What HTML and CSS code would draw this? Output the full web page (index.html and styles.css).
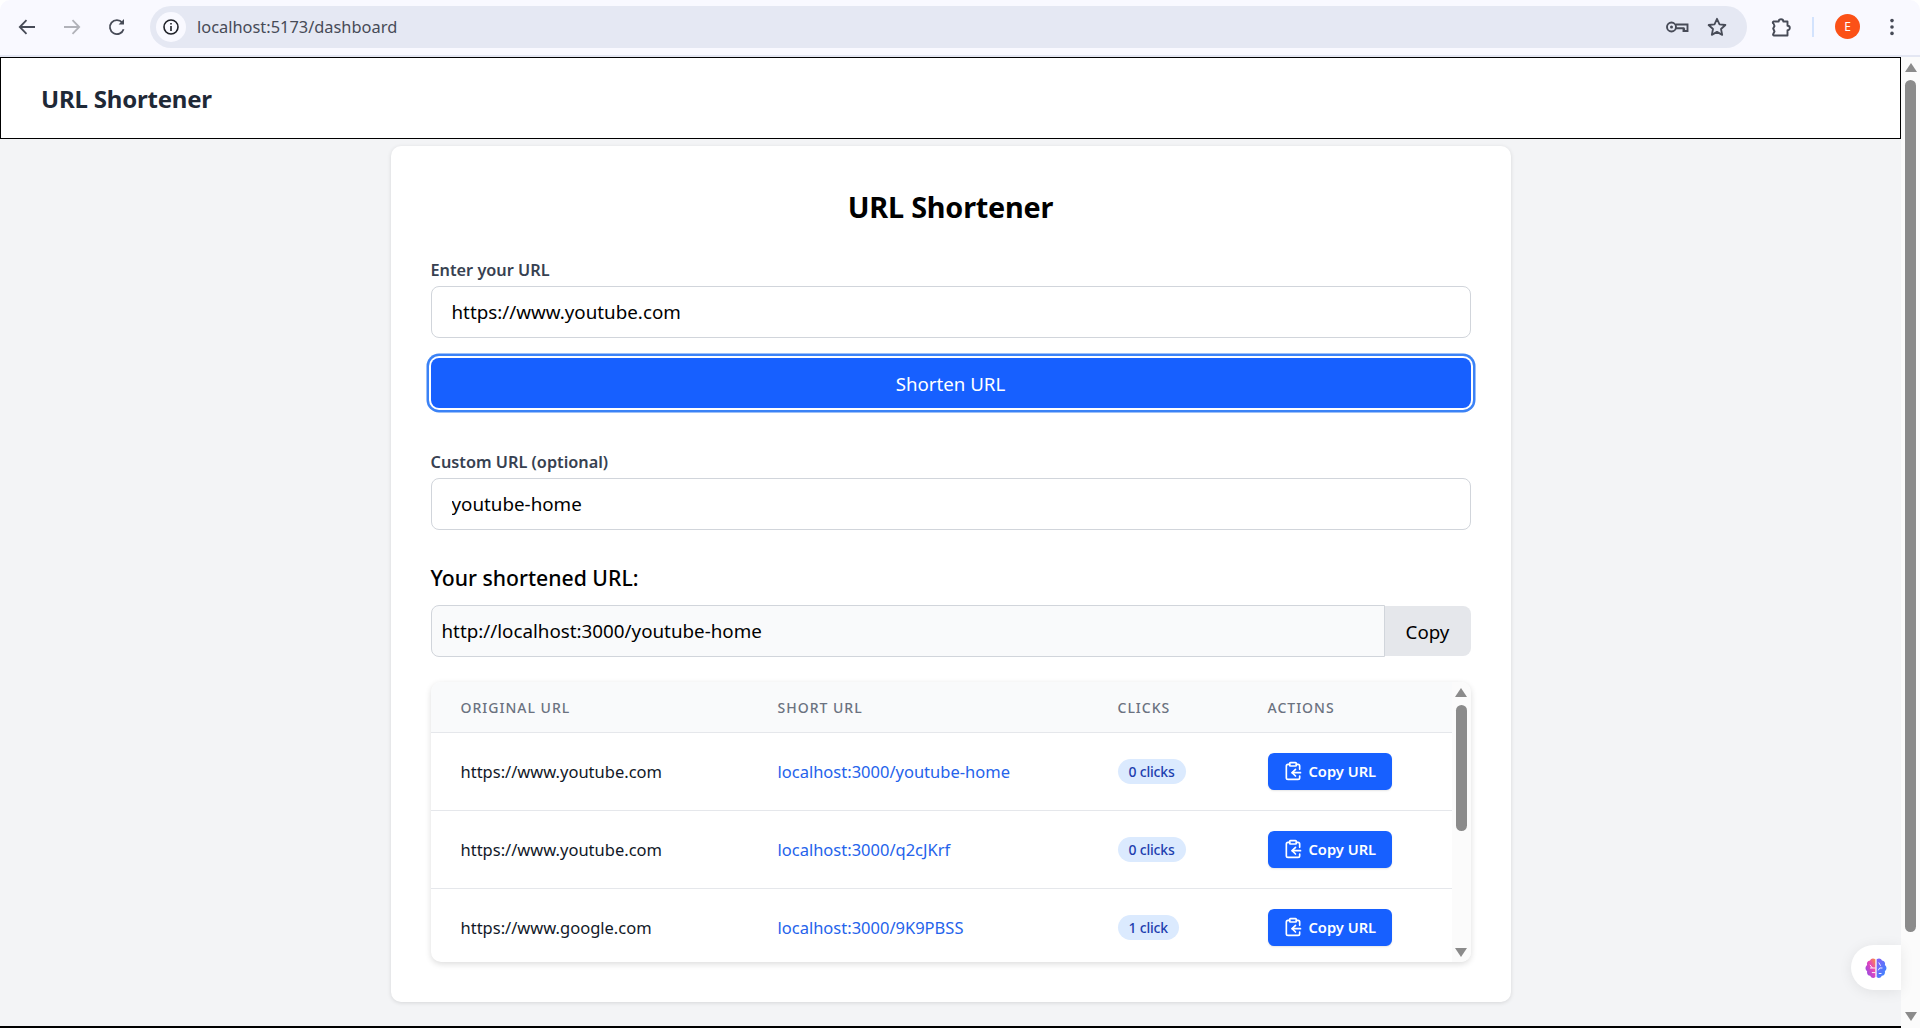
FILE: index.html
```html
<!DOCTYPE html>
<html lang="en">
<head>
    <meta charset="UTF-8">
    <meta name="viewport" content="width=device-width, initial-scale=1.0">
    <title>URL Shortener</title>
    <link rel="stylesheet" href="styles.css">
</head>
<body>
    <svg class="icon-defs" width="0" height="0">
        <symbol id="clipboard" viewBox="0 0 24 24" fill="none" stroke="currentColor" stroke-width="2" stroke-linecap="round" stroke-linejoin="round">
            <rect width="8" height="4" x="8" y="2" rx="1" ry="1"/>
            <path d="M8 4H6a2 2 0 0 0-2 2v14a2 2 0 0 0 2 2h12a2 2 0 0 0 2-2v-2"/>
            <path d="M16 4h2a2 2 0 0 1 2 2v4"/>
            <path d="M21 14H11"/>
            <path d="m15 10-4 4 4 4"/>
        </symbol>
        <linearGradient id="brainLeft" x1="1" y1="0" x2="0" y2="1">
            <stop offset="0" stop-color="#fb923c"/>
            <stop offset="0.4" stop-color="#e845b8"/>
            <stop offset="1" stop-color="#7c4df0"/>
        </linearGradient>
        <linearGradient id="brainRight" x1="0" y1="0" x2="1" y2="1">
            <stop offset="0" stop-color="#8b5cf6"/>
            <stop offset="1" stop-color="#2f8bff"/>
        </linearGradient>
    </svg>

    <div class="browser-bar">
        <div class="nav-buttons">
            <svg class="nav-icon" width="24" height="24" viewBox="0 0 24 24" fill="none" stroke="#474b57" stroke-width="1.8">
                <path d="M20 12H5M11.500 5.200 4.800 12l6.700 6.800"/>
            </svg>
            <svg class="nav-icon" width="24" height="24" viewBox="0 0 24 24" fill="none" stroke="#b1b2b9" stroke-width="1.8">
                <path d="M4 12h15M12.500 5.200l6.700 6.800-6.700 6.800"/>
            </svg>
            <svg class="nav-icon" width="24" height="24" viewBox="0 0 24 24" fill="none" stroke="#474b57" stroke-width="1.8">
                <path d="M18.600 14.200a7 7 0 1 1-1.300-6.600"/>
                <path d="M19 4v5.400h-5.400z" fill="#474b57" stroke="none"/>
            </svg>
        </div>
        <div class="address-bar">
            <span class="site-info">
                <svg width="18" height="18" viewBox="0 0 18 18" fill="none" stroke="#1f2128" stroke-width="1.6">
                    <circle cx="9" cy="9" r="7"/>
                    <path d="M9 8v5M9 5v1.600"/>
                </svg>
            </span>
            <span class="address-text">localhost:5173/dashboard</span>
            <svg class="key-icon" width="24" height="24" viewBox="0 0 24 24" fill="none" stroke="#474b57" stroke-width="1.9">
                <circle cx="6.500" cy="12" r="4.500"/>
                <circle cx="6.500" cy="12" r="1.500" fill="#474b57" stroke="none"/>
                <path d="M11 9.500h11.500v6.500h-4v-2.800H11"/>
                <path d="M19.500 13.200V16" stroke-width="1.200"/>
            </svg>
            <svg class="star-icon" width="24" height="24" viewBox="0 0 24 24" fill="none" stroke="#474b57" stroke-width="1.8" stroke-linejoin="round">
                <path d="m12 3.800 2.500 5.500 5.900.7-4.400 4 1.200 5.900-5.200-3-5.200 3 1.200-5.900-4.400-4 5.900-.7z"/>
            </svg>
        </div>
        <svg class="puzzle-icon" width="24" height="24" viewBox="0 0 24 24" fill="none" stroke="#474b57" stroke-width="1.9" stroke-linejoin="round">
            <path d="M5.500 6.500h4.200a2.300 2.300 0 0 1 4.600 0h4.200v4.200a2.300 2.300 0 0 1 0 4.600v5.200H5a1 1 0 0 1-.8-1.500l1.300-2.500-1.300-3 1.300-2.500-1-2.500a1 1 0 0 1 1-2z"/>
        </svg>
        <span class="bar-divider"></span>
        <span class="avatar">E</span>
        <svg class="menu-icon" width="24" height="24" viewBox="0 0 24 24" fill="#474b57">
            <circle cx="12" cy="5.600" r="1.800"/>
            <circle cx="12" cy="12" r="1.800"/>
            <circle cx="12" cy="18.400" r="1.800"/>
        </svg>
    </div>

    <div class="viewport">
        <div class="page-scroll">
            <header class="site-header">
                <div class="site-title">URL Shortener</div>
            </header>

            <main class="main">
                <section class="card">
                    <h1 class="card-title">URL Shortener</h1>

                    <label class="field-label first-label" for="urlInput">Enter your URL</label>
                    <input class="text-input" id="urlInput" type="text" value="https://www.youtube.com">
                    <button class="shorten-btn">Shorten URL</button>

                    <label class="field-label custom-label" for="customInput">Custom URL (optional)</label>
                    <input class="text-input" id="customInput" type="text" value="youtube-home">

                    <h2 class="result-title">Your shortened URL:</h2>
                    <div class="result-row">
                        <input class="result-input" type="text" value="http://localhost:3000/youtube-home" readonly>
                        <button class="copy-btn">Copy</button>
                    </div>

                    <div class="table-wrap">
                        <table class="url-table">
                            <colgroup>
                                <col class="col-original">
                                <col class="col-short">
                                <col class="col-clicks">
                                <col class="col-actions">
                            </colgroup>
                            <thead>
                                <tr>
                                    <th>Original URL</th>
                                    <th>Short URL</th>
                                    <th>Clicks</th>
                                    <th>Actions</th>
                                </tr>
                            </thead>
                            <tbody>
                                <tr>
                                    <td>https://www.youtube.com</td>
                                    <td><a class="short-link" href="#">localhost:3000/youtube-home</a></td>
                                    <td><span class="click-pill">0 clicks</span></td>
                                    <td><button class="copy-url-btn"><svg width="20" height="20"><use href="#clipboard"/></svg>Copy URL</button></td>
                                </tr>
                                <tr>
                                    <td>https://www.youtube.com</td>
                                    <td><a class="short-link" href="#">localhost:3000/q2cJKrf</a></td>
                                    <td><span class="click-pill">0 clicks</span></td>
                                    <td><button class="copy-url-btn"><svg width="20" height="20"><use href="#clipboard"/></svg>Copy URL</button></td>
                                </tr>
                                <tr>
                                    <td>https://www.google.com</td>
                                    <td><a class="short-link" href="#">localhost:3000/9K9PBSS</a></td>
                                    <td><span class="click-pill">1 click</span></td>
                                    <td><button class="copy-url-btn"><svg width="20" height="20"><use href="#clipboard"/></svg>Copy URL</button></td>
                                </tr>
                            </tbody>
                        </table>
                        <div class="scrollbar table-scrollbar">
                            <span class="arrow-up"></span>
                            <span class="thumb"></span>
                            <span class="arrow-down"></span>
                        </div>
                    </div>
                </section>
            </main>

            <footer class="site-footer"></footer>
        </div>

        <div class="scrollbar page-scrollbar">
            <span class="arrow-up"></span>
            <span class="thumb"></span>
            <span class="arrow-down"></span>
        </div>

        <div class="assistant-tab">
            <svg width="24" height="22" viewBox="0 0 26 24" fill="none">
                <path d="M12.300 2.500C10 .8 7.300 1.500 6.500 3.800 3.800 4 2.500 6.500 3.300 8.800 1 10.500 1 14 3.300 15.500c-.6 2.700 1 4.800 3.400 5 1.200 2.700 3.800 3 5.600 1.300z" fill="url(#brainLeft)"/>
                <path d="M13.700 2.500c2.300-1.700 5-1 5.800 1.300 2.700.2 4 2.700 3.200 5 2.300 1.700 2.300 5.200 0 6.700.6 2.700-1 4.800-3.400 5-1.200 2.700-3.800 3-5.600 1.300z" fill="url(#brainRight)"/>
                <path d="M12.300 12H6.500M9 12 6.500 8.500M12.300 17H8.500M16 6l2 3.500M20 12h-3l-1.500 2.500M16 18h3" stroke="#fff" stroke-width="1"/>
            </svg>
        </div>
    </div>
</body>
</html>
```

FILE: styles.css
```css
* {
    margin: 0;
    padding: 0;
    box-sizing: border-box;
}

html, body {
    height: 100%;
}

body {
    display: flex;
    flex-direction: column;
    overflow: hidden;
    background-color: #fff;
    font-family: "Noto Sans", "Open Sans", sans-serif;
    color: #000;
}

.icon-defs {
    position: absolute;
}

/* browser toolbar */
.browser-bar {
    flex: none;
    display: flex;
    align-items: center;
    height: 57px;
    padding: 0 16px 2px 15px;
    background-color: #f9f9ff;
    border-bottom: 2px solid #e4e7f3;
    border-radius: 10px 10px 0 0;
}

.nav-buttons {
    display: flex;
    gap: 21px;
}

.address-bar {
    display: flex;
    align-items: center;
    width: 1597px;
    height: 42px;
    margin-left: 21px;
    padding: 0 18px 0 6px;
    background-color: #e5e8f3;
    border-radius: 21px;
}

.site-info {
    display: flex;
    align-items: center;
    justify-content: center;
    width: 30px;
    height: 30px;
    background-color: #f9f9ff;
    border-radius: 50%;
}

.address-text {
    flex: 1;
    margin-left: 11px;
    font-size: 16.4px;
    color: #474b57;
}

.key-icon {
    margin-right: 16px;
}

.puzzle-icon {
    margin-left: 22px;
}

.bar-divider {
    width: 2px;
    height: 20px;
    margin-left: 19px;
    background-color: #d3e3fd;
}

.avatar {
    display: flex;
    align-items: center;
    justify-content: center;
    width: 25px;
    height: 25px;
    margin-left: 21px;
    background-color: #fb5117;
    border-radius: 50%;
    font-size: 12px;
    color: #fff;
}

.menu-icon {
    margin-left: 20px;
}

/* page area */
.viewport {
    position: relative;
    display: flex;
    flex: 1;
    min-height: 0;
}

.page-scroll {
    flex: 1;
    min-width: 0;
    overflow: hidden;
    background-color: #f3f4f6;
}

/* scrollbars are drawn, the headless window hides the native ones */
.scrollbar {
    flex: none;
    display: flex;
    flex-direction: column;
    align-items: center;
    width: 19px;
    background-color: #fbfbfb;
}

.page-scrollbar {
    padding: 6px 0 7px;
}

.table-scrollbar {
    padding: 6px 0 5px;
}

.arrow-up,
.arrow-down {
    width: 0;
    height: 0;
    border-left: 6.5px solid transparent;
    border-right: 6.5px solid transparent;
}

.arrow-up {
    border-bottom: 9px solid #8b8b8b;
}

.arrow-down {
    margin-top: auto;
    border-top: 9px solid #8b8b8b;
}

.thumb {
    width: 11px;
    margin-top: 8px;
    background-color: #8b8b8b;
    border-radius: 6px;
}

.page-scrollbar .thumb {
    height: 852px;
}

.table-scrollbar .thumb {
    height: 126px;
}

.site-header {
    display: flex;
    align-items: center;
    height: 82px;
    padding: 1px 40px 0;
    background-color: #fff;
    border: 1px solid #000;
}

.site-title {
    font-size: 24px;
    font-weight: 700;
    letter-spacing: -0.2px;
    color: #1f2937;
}

.main {
    padding: 7px 0 24px;
}

.card {
    width: 1120px;
    height: 856px;
    margin: 0 auto;
    padding: 41px 40px 40px;
    background-color: #fff;
    border-radius: 10px;
    box-shadow: 0 1px 4px rgba(0, 0, 0, 0.12);
}

.card-title {
    height: 40px;
    font-size: 28.8px;
    line-height: 40px;
    font-weight: 700;
    letter-spacing: -0.2px;
    text-align: center;
}

.field-label {
    display: block;
    height: 20px;
    margin-bottom: 6px;
    font-size: 16.3px;
    line-height: 20px;
    font-weight: 600;
    color: #374151;
}

.first-label {
    margin-top: 33px;
}

.custom-label {
    margin-top: 44px;
}

.text-input {
    display: block;
    width: 100%;
    height: 52px;
    padding: 0 20px;
    background-color: #fff;
    border: 1px solid #d1d5db;
    border-radius: 8px;
    font: inherit;
    font-size: 18.8px;
    color: #000;
}

.shorten-btn {
    display: block;
    width: 100%;
    height: 50px;
    margin-top: 20px;
    background-color: #1760ff;
    border: none;
    border-radius: 8px;
    box-shadow: 0 0 0 2px #fff, 0 0 0 4.5px #3b82f6;
    font: inherit;
    font-size: 18.7px;
    color: #fff;
}

.result-title {
    height: 28px;
    margin-top: 34px;
    font-size: 21.2px;
    line-height: 28px;
    font-weight: 500;
}

.result-row {
    display: flex;
    align-items: center;
    margin-top: 13px;
}

.result-input {
    width: 954px;
    height: 52px;
    padding: 0 10px;
    background-color: #f9fafb;
    border: 1px solid #d1d5db;
    border-radius: 8px 0 0 8px;
    font: inherit;
    font-size: 18.8px;
    color: #000;
}

.copy-btn {
    flex: 1;
    height: 50px;
    background-color: #e5e7eb;
    border: none;
    border-radius: 0 8px 8px 0;
    font: inherit;
    font-size: 18.7px;
    color: #000;
}

/* links table */
.table-wrap {
    display: flex;
    height: 280px;
    margin-top: 25px;
    overflow: hidden;
    background-color: #fff;
    border-radius: 10px;
    box-shadow: 0 2px 6px rgba(0, 0, 0, 0.14);
}

.url-table {
    flex: 1;
    align-self: flex-start;
    min-width: 0;
    border-collapse: collapse;
    table-layout: fixed;
}

.col-original {
    width: 317px;
}

.col-short {
    width: 340px;
}

.col-clicks {
    width: 150px;
}

.url-table th {
    height: 50px;
    padding: 1px 0 0 30px;
    background-color: #f9fafb;
    border-bottom: 1px solid #e5e7eb;
    font-size: 14px;
    font-weight: 500;
    letter-spacing: 1px;
    text-align: left;
    text-transform: uppercase;
    color: #6b7280;
}

.url-table td {
    height: 78px;
    padding-left: 30px;
    border-bottom: 1px solid #e5e7eb;
    font-size: 16.5px;
    color: #111827;
}

.url-table tbody tr:last-child td {
    border-bottom: none;
}

.short-link {
    color: #2563eb;
    text-decoration: none;
}

.click-pill {
    display: inline-block;
    height: 25px;
    padding: 0 11px;
    background-color: #dbeafe;
    border-radius: 13px;
    font-size: 14px;
    line-height: 25px;
    font-weight: 500;
    letter-spacing: -0.2px;
    color: #1e40af;
}

.copy-url-btn {
    display: inline-flex;
    align-items: center;
    gap: 6px;
    height: 37px;
    padding: 0 16px 0 15px;
    background-color: #1760ff;
    border: none;
    border-radius: 6px;
    box-shadow: 0 1px 2px rgba(0, 0, 0, 0.1);
    font: inherit;
    font-size: 14.7px;
    font-weight: 600;
    color: #fff;
}

.site-footer {
    height: 99px;
    background-color: #fff;
    border-top: 2px solid #000;
}

.assistant-tab {
    position: absolute;
    top: 888px;
    right: 19px;
    display: flex;
    align-items: center;
    justify-content: center;
    width: 50px;
    height: 45px;
    background-color: #fff;
    border-radius: 23px 0 0 23px;
    box-shadow: 0 2px 14px rgba(0, 0, 0, 0.08);
}
```
